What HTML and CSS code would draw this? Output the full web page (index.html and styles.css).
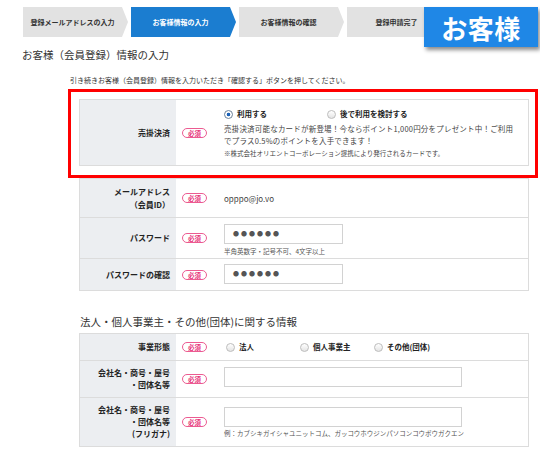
FILE: index.html
```html
<!DOCTYPE html>
<html lang="ja">
<head>
<meta charset="utf-8">
<title>お客様（会員登録）情報の入力</title>
<link rel="stylesheet" href="styles.css">
</head>
<body>
<div class="page">
  <header class="top">
    <ol class="steps">
      <li class="step">登録メールアドレスの入力</li>
      <li class="step current">お客様情報の入力</li>
      <li class="step">お客様情報の確認</li>
      <li class="step">登録申請完了</li>
    </ol>
    <div class="role-badge">お客様</div>
  </header>

  <h1 class="title">お客様（会員登録）情報の入力</h1>
  <p class="intro">引き続きお客様（会員登録）情報を入力いただき「確認する」ボタンを押してください。</p>

  <div class="form-area">
    <div class="highlight">
      <div class="table">
        <div class="row">
          <div class="label">売掛決済</div>
          <div class="req"><span>必須</span></div>
          <div class="field field-pay">
            <div class="radios">
              <span class="radio on w103">利用する</span>
              <span class="radio">後で利用を検討する</span>
            </div>
            <p class="desc">売掛決済可能なカードが新登場！今ならポイント1,000円分をプレゼント中！ご利用<br>でプラス0.5%のポイントを入手できます！</p>
            <p class="note">※株式会社オリエントコーポレーション提携により発行されるカードです。</p>
          </div>
        </div>
      </div>
    </div>

    <div class="table">
      <div class="row">
        <div class="label label-tall">メールアドレス<br>（会員ID）</div>
        <div class="req"><span>必須</span></div>
        <div class="field field-center"><span class="value">opppo@jo.vo</span></div>
      </div>
      <div class="row">
        <div class="label">パスワード</div>
        <div class="req"><span>必須</span></div>
        <div class="field field-pw">
          <div class="input input-short"><span class="dots">●●●●●●</span></div>
          <p class="hint">半角英数字・記号不可、4文字以上</p>
        </div>
      </div>
      <div class="row">
        <div class="label">パスワードの確認</div>
        <div class="req"><span>必須</span></div>
        <div class="field field-pw2">
          <div class="input input-short"><span class="dots">●●●●●●</span></div>
        </div>
      </div>
    </div>

    <h2 class="section">法人・個人事業主・その他(団体)に関する情報</h2>

    <div class="table">
      <div class="row">
        <div class="label">事業形態</div>
        <div class="req"><span>必須</span></div>
        <div class="field field-radio">
          <div class="radios">
            <span class="radio w74">法人</span>
            <span class="radio w74">個人事業主</span>
            <span class="radio">その他(団体)</span>
          </div>
        </div>
      </div>
      <div class="row">
        <div class="label">会社名・商号・屋号<br>・団体名等</div>
        <div class="req"><span>必須</span></div>
        <div class="field field-name">
          <div class="input input-long"></div>
        </div>
      </div>
      <div class="row">
        <div class="label">会社名・商号・屋号<br>・団体名等<br>(フリガナ)</div>
        <div class="req"><span>必須</span></div>
        <div class="field field-kana">
          <div class="input input-long"></div>
          <p class="hint hint-kana">例：カブシキガイシャユニットコム、ガッコウホウジンパソコンコウボウガクエン</p>
        </div>
      </div>
    </div>
  </div>
</div>
</body>
</html>
```

FILE: styles.css
```css
* {
  box-sizing: border-box;
  margin: 0;
  padding: 0;
}

body {
  margin: 0;
  width: 540px;
  height: 450px;
  overflow: hidden;
  background: #fff;
  color: #333;
  font-family: "Noto Sans CJK JP", "Noto Sans", sans-serif;
}

.page {
  position: relative;
}

/* ---- stepper ---- */
.steps {
  list-style: none;
  display: flex;
  gap: 3px;
  margin: 7px 0 0 23px;
}

.step {
  flex: none;
  width: 105px;
  height: 30px;
  padding-right: 6px;
  display: flex;
  align-items: center;
  justify-content: center;
  background: #e2e2e2;
  color: #333;
  font-size: 7px;
  font-weight: bold;
  clip-path: polygon(0 0, calc(100% - 6px) 0, 100% 50%, calc(100% - 6px) 100%, 0 100%);
}

.step.current {
  background: #1b7dd0;
  color: #fff;
}

.role-badge {
  position: absolute;
  top: 0;
  left: 424px;
  width: 114px;
  height: 40px;
  display: flex;
  align-items: center;
  justify-content: center;
  background: #1f87e6;
  color: #fff;
  font-size: 26px;
  font-weight: bold;
  letter-spacing: 0.5px;
  box-shadow: 2px 3px 4px rgba(0, 0, 0, 0.45);
}

/* ---- headings ---- */
.title {
  margin: 11px 0 0 22px;
  font-size: 10.5px;
  font-weight: normal;
  line-height: 14px;
  color: #333;
}

.intro {
  margin: 13px 0 0 70px;
  font-size: 7px;
  line-height: 10px;
  color: #333;
}

.section {
  margin: 24px 0 4px 1px;
  font-size: 10.5px;
  font-weight: normal;
  line-height: 14px;
  color: #333;
}

/* ---- form tables ---- */
.form-area {
  width: 450px;
  margin: 4px 0 0 79px;
}

.highlight {
  margin: 0 -9px 0 -11px;
  padding: 7px 6px 9px 8px;
  border: 3px solid #ff0000;
}

.table {
  border: 1px solid #dcdcdc;
}

.row {
  display: grid;
  grid-template-columns: 96px 48px 1fr;
}

.row + .row {
  border-top: 1px solid #dcdcdc;
}

.label {
  display: flex;
  flex-direction: column;
  justify-content: center;
  align-items: flex-end;
  padding: 6px 6px;
  background: #eceef1;
  text-align: right;
  font-size: 8px;
  font-weight: bold;
  line-height: 12px;
  color: #222;
}

.label-tall {
  line-height: 13px;
}

.req {
  display: flex;
  align-items: center;
  padding-left: 6px;
}

.req span {
  display: block;
  width: 25px;
  height: 10px;
  border: 1px solid #ec5b91;
  border-radius: 5px;
  color: #e6337a;
  font-size: 6.5px;
  font-weight: bold;
  line-height: 8px;
  text-align: center;
}

.field {
  padding-right: 4px;
  font-size: 8px;
}

.field-pay {
  padding-top: 8px;
  padding-bottom: 6px;
}

.field-center {
  display: flex;
  align-items: center;
}

.field-pw {
  padding-top: 6px;
  padding-bottom: 2px;
}

.field-pw2 {
  padding-top: 5px;
  padding-bottom: 6px;
}

.field-radio {
  padding-top: 7px;
  padding-bottom: 7px;
}

.field-name {
  padding-top: 6px;
}

.field-kana {
  padding-top: 9px;
}

.value {
  font-size: 8px;
  color: #444;
}

/* radios */
.radios {
  display: flex;
  align-items: center;
}

.radio {
  display: flex;
  align-items: center;
  gap: 4px;
  font-size: 7.5px;
  font-weight: bold;
  line-height: 12px;
  color: #222;
}

.radio::before {
  content: "";
  flex: none;
  width: 7px;
  height: 7px;
  border: 1px solid #bdbdbd;
  border-radius: 50%;
  background: linear-gradient(#fff, #e4e4e4);
}

.radio.on::before {
  border-color: #6d8298;
  background: radial-gradient(circle, #1d63b8 0 1.6px, #fff 2.1px);
}

.field-radio .radios {
  padding-left: 2px;
}

.w103 {
  width: 103px;
}

.w74 {
  width: 74px;
}

.desc {
  margin-top: 3px;
  font-size: 7.5px;
  letter-spacing: 0.2px;
  line-height: 12px;
  color: #444;
  white-space: nowrap;
}

.note {
  margin-top: 1px;
  font-size: 6.5px;
  line-height: 11px;
  color: #444;
  white-space: nowrap;
}

/* inputs */
.input {
  height: 20px;
  display: flex;
  align-items: center;
  padding-left: 8px;
  border: 1px solid #d2d2d2;
  background: #fff;
}

.input-short {
  width: 119px;
}

.input-long {
  width: 238px;
}

.dots {
  font-size: 6px;
  letter-spacing: 2px;
  color: #555;
  line-height: 1;
}

.hint {
  margin-top: 2px;
  font-size: 6.5px;
  line-height: 10px;
  color: #555;
  white-space: nowrap;
}

.hint-kana {
  margin-top: 1px;
}
```
